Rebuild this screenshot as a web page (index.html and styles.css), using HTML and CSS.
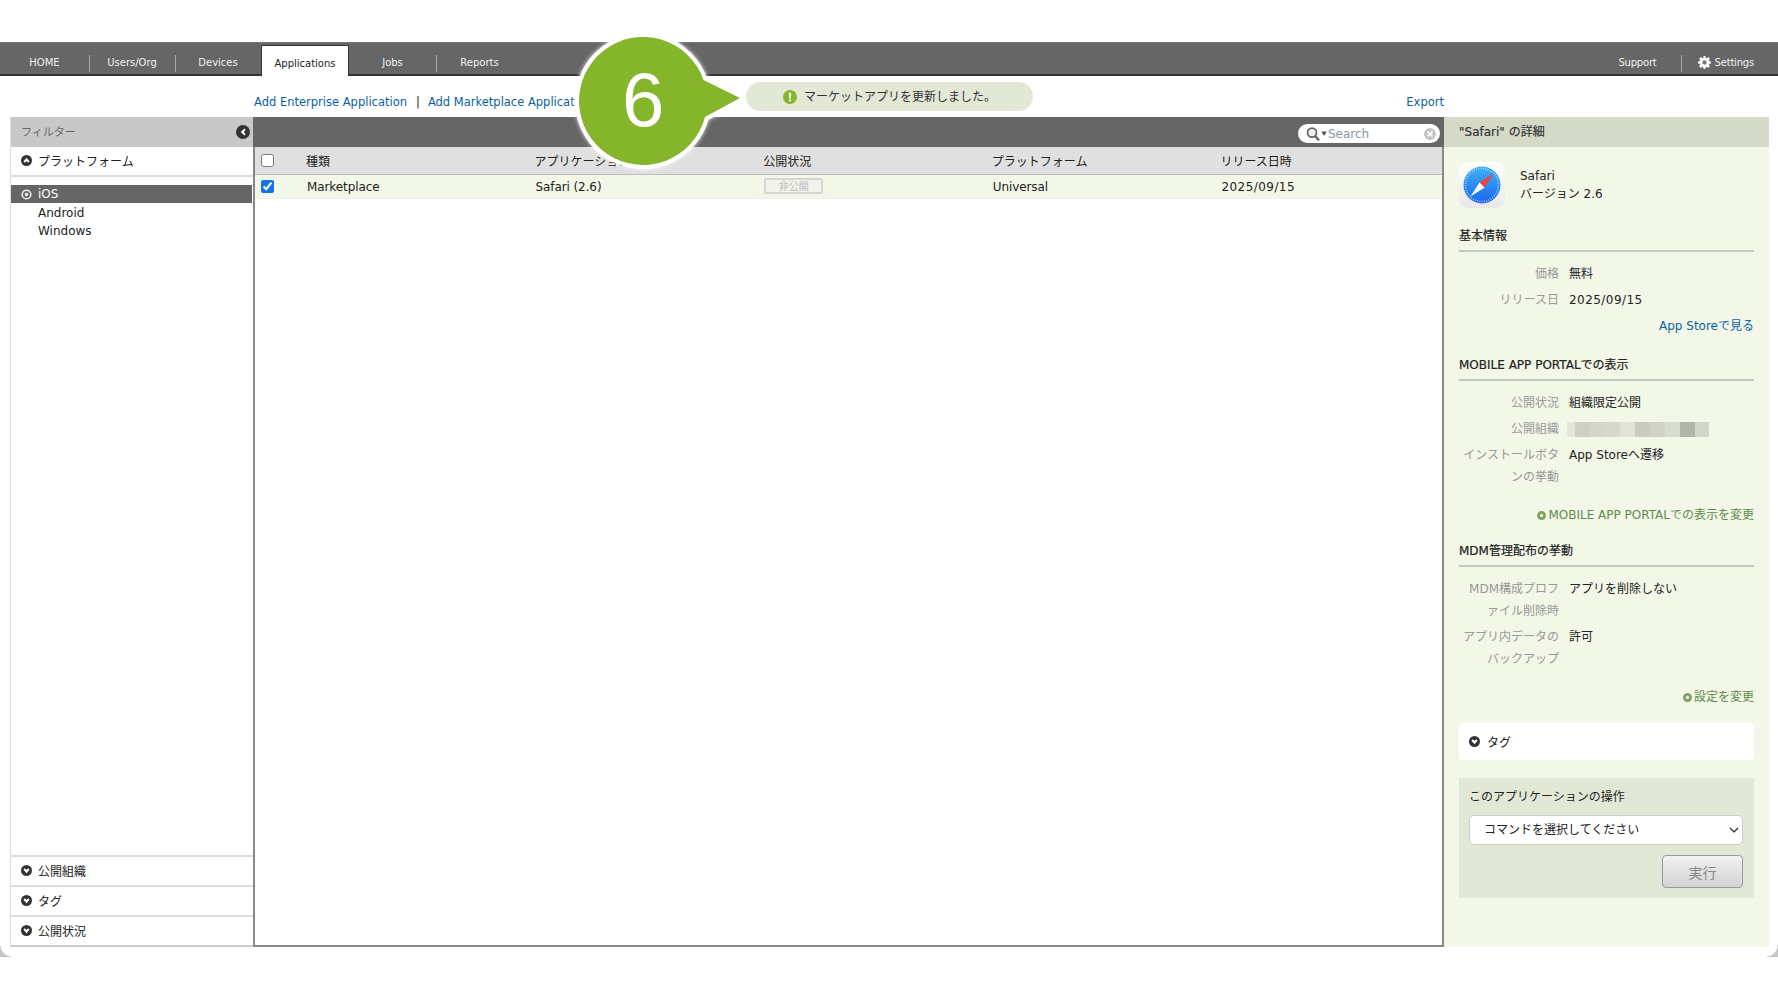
FILE: index.html
```html
<!DOCTYPE html>
<html lang="ja">
<head>
<meta charset="utf-8">
<title>Applications</title>
<link rel="stylesheet" href="styles.css">
</head>
<body>
<svg class="defs" width="0" height="0" aria-hidden="true">
  <symbol id="i-down" viewBox="0 0 14 14"><circle cx="7" cy="7" r="7" fill="#333"/><path d="M3.2 6 7 10.4 10.8 6 9.4 4.2 7 6.2 4.6 4.2z" fill="#fff"/></symbol>
  <symbol id="i-up" viewBox="0 0 14 14"><circle cx="7" cy="7" r="7" fill="#333"/><path d="M3.2 8 7 3.6 10.8 8 9.4 9.8 7 7.8 4.6 9.8z" fill="#fff"/></symbol>
  <symbol id="i-ring" viewBox="0 0 14 14"><circle cx="7" cy="7" r="5.5" fill="none" stroke="currentColor" stroke-width="2"/><circle cx="7" cy="7" r="2.2" fill="currentColor"/></symbol>
  <symbol id="i-ring-bold" viewBox="0 0 14 14"><circle cx="7" cy="7" r="4.8" fill="#e6efd8" stroke="currentColor" stroke-width="4.2"/></symbol>
</svg>
<div class="page">
  <nav class="nav">
    <a class="nav-item first">HOME</a>
    <a class="nav-item sep">Users/Org</a>
    <a class="nav-item sep">Devices</a>
    <a class="nav-item active">Applications</a>
    <a class="nav-item">Jobs</a>
    <a class="nav-item sep">Reports</a>
    <div class="nav-right">
      <a class="nav-link">Support</a>
      <span class="nav-sep"></span>
      <a class="nav-link settings">
        <svg class="gear" viewBox="0 0 14 14"><path d="M6 0h2l.3 1.8 1.2.5L11 1.2 12.8 3l-1.1 1.5.5 1.2L14 6v2l-1.8.3-.5 1.2 1.1 1.5-1.8 1.8-1.5-1.1-1.2.5L8 14H6l-.3-1.8-1.2-.5L3 12.8 1.2 11l1.1-1.5-.5-1.2L0 8V6l1.8-.3.5-1.2L1.2 3 3 1.2l1.5 1.1 1.2-.5z" fill="#fff"/><circle cx="7" cy="7" r="2.3" fill="#777"/></svg>
        Settings
      </a>
    </div>
  </nav>

  <div class="actions">
    <a class="link">Add Enterprise Application</a>
    <span class="pipe">|</span>
    <a class="link">Add Marketplace Application</a>
    <a class="link export">Export</a>
  </div>

  <main class="main">
    <aside class="filter">
      <div class="filter-head">
        <span>フィルター</span>
        <svg class="collapse" viewBox="0 0 14 14"><circle cx="7" cy="7" r="7" fill="#333"/><path d="M8.6 3.4 4.6 7l4 3.6 1-1.4L7.8 7l1.8-2.2z" fill="#fff"/></svg>
      </div>
      <div class="filter-row open"><svg class="chev"><use href="#i-up"/></svg>プラットフォーム</div>
      <ul class="platforms">
        <li class="selected"><svg class="ring"><use href="#i-ring"/></svg>iOS</li>
        <li>Android</li>
        <li>Windows</li>
      </ul>
      <div class="filter-bottom">
        <div class="filter-row"><svg class="chev"><use href="#i-down"/></svg>公開組織</div>
        <div class="filter-row"><svg class="chev"><use href="#i-down"/></svg>タグ</div>
        <div class="filter-row"><svg class="chev"><use href="#i-down"/></svg>公開状況</div>
      </div>
    </aside>

    <section class="list">
      <div class="toolbar">
        <div class="search">
          <svg class="search-icon" viewBox="0 0 22 14"><circle cx="6" cy="5.6" r="4.5" fill="#f4f4f4" stroke="#666" stroke-width="1.7"/><path d="m9 9 4 4.4" stroke="#666" stroke-width="2.4" fill="none"/><path d="M15.4 4.6h5.4l-2.7 4.4z" fill="#555"/></svg>
          <span class="search-text">Search</span>
          <svg class="search-clear" viewBox="0 0 12 12"><circle cx="6" cy="6" r="6" fill="#c4c4c4"/><path d="m3.6 3.6 4.8 4.8m0-4.8L3.6 8.4" stroke="#fff" stroke-width="1.6"/></svg>
        </div>
      </div>
      <table class="table">
        <thead>
          <tr>
            <th class="check"><input type="checkbox"></th>
            <th class="col">種類</th><th class="col">アプリケーション</th><th class="col">公開状況</th><th class="col">プラットフォーム</th><th>リリース日時</th>
          </tr>
        </thead>
        <tbody>
          <tr>
            <td class="check"><input type="checkbox" checked></td>
            <td>Marketplace</td><td>Safari (2.6)</td><td><span class="status">非公開</span></td><td>Universal</td><td class="num">2025/09/15</td>
          </tr>
        </tbody>
      </table>
    </section>

    <aside class="detail">
      <h2 class="detail-head">"Safari" の詳細</h2>
      <div class="detail-body">
        <div class="app">
          <svg class="app-icon" viewBox="0 0 46 46">
            <defs>
              <linearGradient id="tile" x1="0" y1="0" x2="0" y2="1"><stop offset="0" stop-color="#fff"/><stop offset="1" stop-color="#e8e8e8"/></linearGradient>
              <linearGradient id="dial" x1="0" y1="0" x2="0" y2="1"><stop offset="0" stop-color="#3fb2f0"/><stop offset="1" stop-color="#1a66f0"/></linearGradient>
            </defs>
            <rect width="46" height="46" rx="9" fill="url(#tile)"/>
            <circle cx="23" cy="23" r="18.5" fill="url(#dial)"/>
            <circle cx="23" cy="23" r="16.5" fill="none" stroke="#cfe6fa" stroke-width="1.6" stroke-dasharray="0.7 1.6"/>
            <path d="M34.5 11.5 20.5 20.5l5 5z" fill="#f4413a"/>
            <path d="M11.5 34.5 25.5 25.5l-5-5z" fill="#fff"/>
          </svg>
          <div class="app-text"><div>Safari</div><div>バージョン 2.6</div></div>
        </div>

        <h3 class="sec first-sec">基本情報</h3>
        <dl class="rows">
          <div class="row"><dt>価格</dt><dd>無料</dd></div>
          <div class="row"><dt>リリース日</dt><dd class="num">2025/09/15</dd></div>
        </dl>
        <div class="more store">App Storeで見る</div>

        <h3 class="sec portal">MOBILE APP PORTALでの表示</h3>
        <dl class="rows">
          <div class="row"><dt>公開状況</dt><dd>組織限定公開</dd></div>
          <div class="row"><dt>公開組織</dt><dd class="blur-cell"><span class="blur"></span></dd></div>
          <div class="row"><dt>インストールボタ<br>ンの挙動</dt><dd>App Storeへ遷移</dd></div>
        </dl>
        <div class="more change first-change"><svg class="ring green"><use href="#i-ring-bold"/></svg>MOBILE APP PORTALでの表示を変更</div>

        <h3 class="sec mdm">MDM管理配布の挙動</h3>
        <dl class="rows">
          <div class="row"><dt>MDM構成プロフ<br>ァイル削除時</dt><dd>アプリを削除しない</dd></div>
          <div class="row"><dt>アプリ内データの<br>バックアップ</dt><dd>許可</dd></div>
        </dl>
        <div class="more change second-change"><svg class="ring green"><use href="#i-ring-bold"/></svg>設定を変更</div>

        <div class="tag-box"><svg class="chev"><use href="#i-down"/></svg>タグ</div>

        <div class="ops">
          <div class="ops-title">このアプリケーションの操作</div>
          <div class="select-wrap">
            <select class="select"><option>コマンドを選択してください</option></select>
            <svg class="select-arrow" viewBox="0 0 10 6"><path d="m1 1 4 4 4-4" fill="none" stroke="#222" stroke-width="1.2"/></svg>
          </div>
          <div class="ops-foot"><button class="run" type="button">実行</button></div>
        </div>
      </div>
    </aside>
  </main>
</div>

<span class="corner left"></span>
<span class="corner right"></span>

<div class="toast">
  <svg class="toast-icon" viewBox="0 0 14 14"><circle cx="7" cy="7" r="7" fill="#85b52a"/><rect x="5.9" y="2.8" width="2.2" height="5.6" rx="1" fill="#fff"/><rect x="5.9" y="9.3" width="2.2" height="2.2" rx="1" fill="#fff"/></svg>
  マーケットアプリを更新しました。
</div>

<div class="step">
  <svg class="step-shape" viewBox="0 0 180 150">
    <path d="M131.5 51 168 69 133 88A64 64 0 1 1 131.5 51z" fill="#85b52a" stroke="#fff" stroke-width="8" stroke-linejoin="round" paint-order="stroke"/>
  </svg>
  <span class="step-num">6</span>
</div>
</body>
</html>
```
FILE: styles.css
```css
* { box-sizing: border-box; }
html, body { margin: 0; padding: 0; background: #fff; }
body {
  width: 1778px;
  height: 1000px;
  overflow: hidden;
  position: relative;
  font-family: "DejaVu Sans", "Noto Sans CJK JP", sans-serif;
  font-size: 12px;
  color: #222;
}
.defs { position: absolute; }
a { text-decoration: none; }
.page { padding-top: 42px; }
.num { letter-spacing: 0.45px; }

/* nav */
.nav {
  display: flex;
  height: 34px;
  background: #666;
  border-top: 1px solid #777;
  border-bottom: 2px solid #333;
  color: #f0f0f0;
  font-size: 10px;
}
.nav-item {
  position: relative;
  width: 87px;
  display: flex;
  align-items: center;
  justify-content: center;
  padding-top: 7px;
}
.nav-item.first { width: 89px; }
.nav-item:nth-child(2), .nav-item:nth-child(3) { width: 86px; }
.nav-item.sep::before, .nav-sep {
  content: "";
  width: 1px;
  height: 17px;
  background: #aaa;
}
.nav-item.sep::before { position: absolute; left: 0; top: 12px; }
.nav-item.active {
  width: 88px;
  margin: 2px 0 -2px;
  background: #fff;
  color: #222;
  border: 1px solid #333;
  border-bottom: 0;
  border-radius: 2px 2px 0 0;
  padding-top: 4px;
}
.nav-right {
  margin-left: auto;
  display: flex;
  align-items: center;
  padding: 7px 24px 0 0;
}
.nav-sep { margin: 2px 16px 0 24px; }
.nav-link { display: flex; align-items: center; gap: 4px; letter-spacing: -0.2px; }
.gear { width: 13px; height: 13px; }

/* action row */
.actions {
  height: 41px;
  display: flex;
  align-items: center;
  padding: 11px 334px 0 254px;
  font-size: 11.5px;
}
.link { color: #0b5fa5; }
.pipe { margin: 0 8px 0 9px; color: #222; }
.export { margin-left: auto; }

/* columns */
.main { display: flex; height: 830px; margin: 0 9px 0 10px; }

.filter {
  width: 243px;
  flex: none;
  display: flex;
  flex-direction: column;
  border-left: 1px solid #ddd;
}
.filter-head {
  height: 30px;
  background: #c8c8c8;
  color: #666;
  display: flex;
  align-items: center;
  justify-content: space-between;
  padding: 0 3px 3px 10px;
  font-size: 11px;
}
.collapse { width: 14px; height: 14px; margin-top: 3px; }
.filter-row {
  height: 30px;
  display: flex;
  align-items: center;
  gap: 6px;
  padding: 0 0 2px 10px;
  border-top: 2px solid #ddd;
}
.filter-row.open { border-top: 0; border-bottom: 2px solid #ddd; height: 30px; }
.filter-row:last-child { border-bottom: 2px solid #ccc; height: 32px; padding-bottom: 1px; }
.chev { width: 11px; height: 11px; flex: none; }
.platforms { list-style: none; margin: 8px 0 0; padding: 0; }
.platforms li { height: 18px; line-height: 18px; padding-left: 27px; margin-bottom: 0; }
.platforms .selected {
  position: relative;
  height: 18px;
  background: #666;
  color: #fff;
  margin: 0 1px 1px 0;
}
.ring { width: 11px; height: 11px; position: absolute; left: 10px; top: 4px; color: #eee; }
.filter-bottom { margin-top: auto; }

/* list */
.list {
  flex: 1;
  min-width: 0;
  border-left: 2px solid #888;
  border-right: 2px solid #888;
  border-bottom: 2px solid #888;
  background: #fff;
}
.toolbar {
  height: 30px;
  background: #666;
  margin-left: -2px;
  margin-right: -2px;
  display: flex;
  align-items: center;
  justify-content: flex-end;
  padding-right: 4px;
  padding-top: 3px;
}
.search {
  width: 142px;
  height: 19px;
  background: #fff;
  border-radius: 10px;
  display: flex;
  align-items: center;
  padding: 0 4px 0 8px;
  color: #8a96a6;
}
.search-icon { width: 22px; height: 14px; flex: none; }
.search-text { margin-left: 0; }
.search-clear { width: 12px; height: 12px; margin-left: auto; }

.table { width: 100%; border-collapse: collapse; table-layout: fixed; }
.table th {
  height: 27px;
  background: #e0e0e0;
  border-bottom: 1px solid #bbb;
  font-weight: normal;
  text-align: left;
  padding: 0;
}
.table .col { width: 228.6px; }
.table td {
  height: 24px;
  background: #f2f7e8;
  padding: 2px 0 0 1px;
  border-bottom: 1px solid #eef0ea;
  letter-spacing: -0.1px;
}
.table td.num { letter-spacing: 0.45px; }
.table .check { width: 51px; padding: 0 0 0 6px; }
.check input { display: block; width: 13px; height: 13px; margin: 0; accent-color: #1673e6; }
.status {
  display: block;
  width: 59px;
  height: 16px;
  line-height: 13px;
  background: #f2f4ec;
  border: 2px solid #d6d6d6;
  border-radius: 2px;
  font-size: 10px;
  color: #bbb;
  text-align: center;
  margin: -2px 0 0 0;
}

/* detail */
.detail { width: 325px; flex: none; background: #f2f7e8; }
.detail-head {
  margin: 0;
  height: 30px;
  background: #d5d9c8;
  font-size: 12px;
  font-weight: normal;
  color: #333;
  line-height: 30px;
  padding-left: 15px;
  -webkit-text-stroke: 0.2px #333;
}
.detail-body { padding: 15px 15px 0; }
.app { display: flex; align-items: center; gap: 15px; height: 46px; }
.app-icon { width: 46px; height: 46px; flex: none; }
.app-text { line-height: 18px; }
.sec {
  margin: 0;
  font-size: 12px;
  font-weight: normal;
  -webkit-text-stroke: 0.2px #222;
  line-height: 20px;
  padding-bottom: 4px;
  border-bottom: 2px solid #c6cac2;
}
.first-sec { margin-top: 18px; }
.rows { margin: 0; padding-top: 11px; }
.row { display: flex; margin-bottom: 4px; line-height: 22px; }
.row dt { width: 100px; flex: none; text-align: right; color: #999; }
.row dd { margin: 0 0 0 10px; flex: 1; }
.blur-cell { display: flex; align-items: center; }
.blur {
  display: block;
  width: 142px;
  height: 15px;
  margin-left: -2px;
  background: linear-gradient(90deg,
    #e3e6da 0 8px, #cdd0c3 8px 23px, #d3d6c9 23px 38px, #d6d9cc 38px 53px,
    #e0e3d7 53px 68px, #c9ccbf 68px 83px, #cfd2c6 83px 98px, #d9dcd0 98px 113px,
    #b2b5a9 113px 128px, #d3d6ca 128px 142px);
}
.more { text-align: right; line-height: 18px; }
.store { color: #0b5fa5; margin-top: 6px; }
.change { color: #5f8a4c; display: flex; justify-content: flex-end; align-items: center; }
.ring.green { position: static; width: 9px; height: 9px; margin-right: 2px; color: #7ea265; }
.portal { margin-top: 20px; }
.first-change { margin-top: 18px; }
.mdm { margin-top: 17px; }
.second-change { margin-top: 18px; }
.tag-box {
  margin-top: 17px;
  height: 37px;
  background: #fff;
  border-radius: 4px;
  display: flex;
  align-items: center;
  gap: 7px;
  padding-left: 10px;
}
.ops {
  margin-top: 18px;
  height: 120px;
  background: #e2e8d6;
  padding: 9px 11px 0 10px;
}
.ops-title { line-height: 20px; }
.select-wrap { position: relative; margin-top: 8px; }
.select {
  appearance: none;
  display: block;
  width: 100%;
  height: 30px;
  padding: 0 0 0 14px;
  background: #fff;
  border: 1px solid #ccc;
  border-radius: 5px;
  font: inherit;
  color: #222;
}
.select-arrow { position: absolute; right: 4px; top: 12px; width: 10px; height: 6px; }
.ops-foot { display: flex; justify-content: flex-end; margin-top: 10px; }
.run {
  width: 81px;
  height: 33px;
  background: linear-gradient(#f2f2f2, #d2d2d2);
  border: 1px solid #999;
  border-radius: 4px;
  font: inherit;
  font-size: 14px;
  color: #888;
  padding: 0;
}

/* overlays */
.corner { position: absolute; top: 945px; width: 12px; height: 12px; }
.corner.left { left: 0; background: radial-gradient(circle at 12px 0, transparent 11px, #c6c6c6 12px); }
.corner.right { right: 0; background: radial-gradient(circle at 0 0, transparent 11px, #c6c6c6 12px); }

.toast {
  position: absolute;
  left: 746px;
  top: 82px;
  width: 287px;
  height: 29px;
  background: #e3e8d6;
  border-radius: 15px;
  display: flex;
  align-items: center;
  gap: 7px;
  padding: 0 0 2px 37px;
  font-size: 12px;
  color: #333;
}
.toast-icon { width: 14px; height: 14px; flex: none; margin-top: 2px; }

.step { position: absolute; left: 572px; top: 29px; width: 180px; height: 150px; }
.step-shape { width: 180px; height: 150px; filter: drop-shadow(0 0 2px rgba(255,255,255,.9)); }
.step-num {
  position: absolute;
  left: 50px;
  top: 28px;
  font-family: "Liberation Sans", sans-serif;
  font-size: 76px;
  line-height: 85px;
  color: #fff;
}
```
